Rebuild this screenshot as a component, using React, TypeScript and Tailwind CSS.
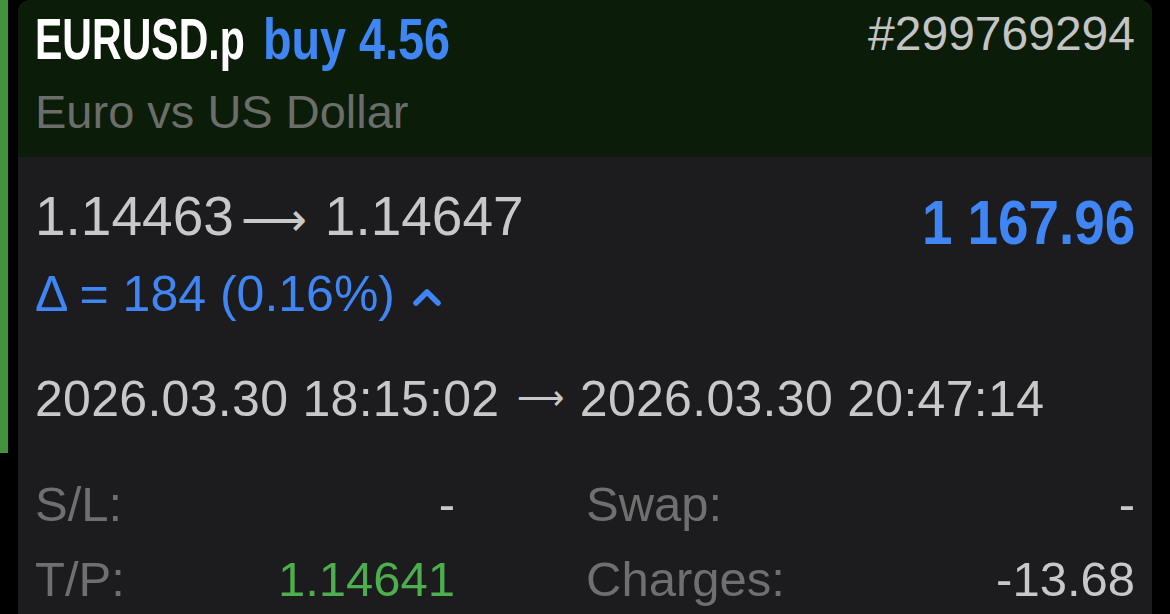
export default function App() {
  const sans = "font-['Liberation_Sans',Arial,sans-serif]";
  const bold = "font-['Liberation_Sans',Arial,sans-serif] font-bold";
  const arrow = "font-['DejaVu_Sans',sans-serif] font-extralight";

  return (
    <div className="w-[1170px] h-[614px] bg-black flex overflow-hidden">
      {/* selection strip */}
      <div className="w-[8px] h-[453px] shrink-0 bg-[#44923d]" />
      <div className="w-[10px] shrink-0" />

      <div className="w-[1134px] shrink-0 flex flex-col rounded-t-[12px] overflow-hidden bg-[#1c1c1e]">
        {/* Header */}
        <div className="h-[157px] shrink-0 bg-[#0b1d09] px-[17px]">
          <div className="flex items-start justify-between">
            <div className={`${bold} mt-[11px] flex text-[57px] leading-none whitespace-nowrap`}>
              <span className="w-[210px] text-white">
                <span className="inline-block origin-left scale-x-[0.72]">EURUSD.p</span>
              </span>
              <span className="ml-[18px] w-[187px] text-[#3f86f4]">
                <span className="inline-block origin-left scale-x-[0.82]">buy 4.56</span>
              </span>
            </div>
            <div className={`${sans} mt-[10px] text-[48px] leading-none text-[#c4c4c4]`}>#299769294</div>
          </div>
          <div className={`${sans} mt-[20px] text-[47px] leading-none text-[#6b6d6b]`}>Euro vs US Dollar</div>
        </div>

        {/* Body */}
        <div className={`${sans} flex-1 px-[17px] pt-[32px]`}>
          <div className="flex items-start justify-between">
            <div className="flex items-baseline text-[55px] leading-none text-[#c8c8c8] whitespace-nowrap">
              <span>1.14463</span>
              <span className={`${arrow} ml-[7px] mr-[18px] text-[46px] translate-y-[1px]`}>⟶</span>
              <span>1.14647</span>
            </div>
            <div className={`${bold} mt-[2px] text-[63px] leading-none text-[#3f86f4] whitespace-nowrap`}>
              <span className="inline-block origin-right scale-x-[0.87]">1 167.96</span>
            </div>
          </div>

          <div className="mt-[15px] flex items-center gap-[18px] text-[50px] leading-none text-[#3f86f4]">
            <span className="whitespace-nowrap">Δ = 184 (0.16%)</span>
            <svg width="28" height="20" viewBox="0 0 28 20" className="mt-[6px]">
              <polyline points="3,16 14,5 25,16" fill="none" stroke="#3f86f4" strokeWidth="5.5" strokeLinecap="round" strokeLinejoin="round" />
            </svg>
          </div>

          <div className="mt-[55px] flex items-baseline text-[50px] leading-none tracking-[0.3px] text-[#c8c8c8] whitespace-nowrap">
            <span>2026.03.30 18:15:02</span>
            <span className={`${arrow} ml-[18px] mr-[15px] text-[33px] -translate-y-[7px]`}>⟶</span>
            <span>2026.03.30 20:47:14</span>
          </div>

          <div className="mt-[56px] flex flex-col gap-[26px] text-[49px] leading-none">
            <div className="flex">
              <div className="w-[420px] flex justify-between">
                <span className="text-[#6f6f6f]">S/L:</span>
                <span className="text-[#c8c8c8]">-</span>
              </div>
              <div className="ml-[131px] flex-1 flex justify-between">
                <span className="text-[#6f6f6f]">Swap:</span>
                <span className="text-[#c8c8c8]">-</span>
              </div>
            </div>
            <div className="flex">
              <div className="w-[420px] flex justify-between">
                <span className="text-[#6f6f6f]">T/P:</span>
                <span className="text-[#4cae4c]">1.14641</span>
              </div>
              <div className="ml-[131px] flex-1 flex justify-between">
                <span className="text-[#6f6f6f]">Charges:</span>
                <span className="text-[#c8c8c8]">-13.68</span>
              </div>
            </div>
          </div>
        </div>
      </div>
    </div>
  );
}
